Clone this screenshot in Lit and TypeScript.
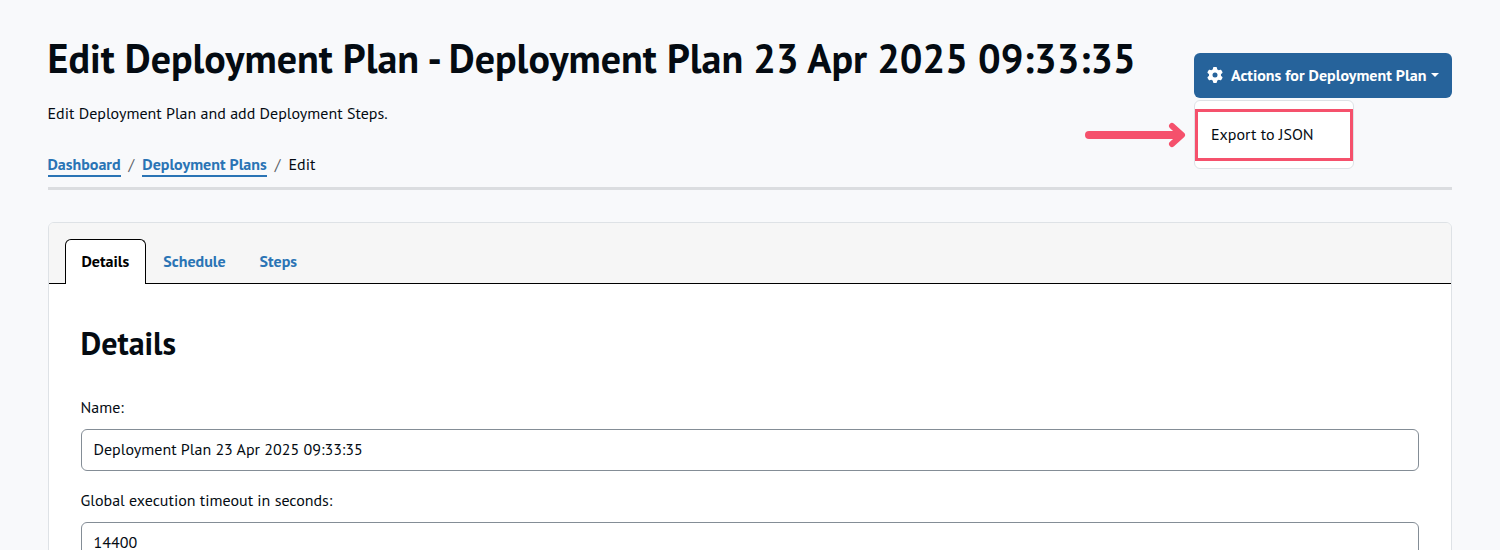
import { LitElement, html, css, svg } from "lit";
import { customElement, property, state } from "lit/decorators.js";

const gear = svg`<path fill="currentColor" d="M495.900 166.600c3.200 8.700.5 18.400-6.400 24.600l-43.300 39.400c1.100 8.300 1.700 16.800 1.700 25.400s-.6 17.100-1.700 25.400l43.300 39.400c6.900 6.200 9.600 15.900 6.400 24.600-4.400 11.900-9.700 23.300-15.800 34.300l-4.700 8.100c-6.600 11-14 21.400-22.100 31.200-5.900 7.200-15.700 9.600-24.500 6.800l-55.700-17.700c-13.400 10.300-28.200 18.900-44 25.400l-12.500 57.100c-2 9.100-9 16.300-18.200 17.800-13.800 2.300-28 3.500-42.500 3.500s-28.700-1.200-42.500-3.500c-9.200-1.500-16.200-8.700-18.200-17.800l-12.500-57.100c-15.800-6.500-30.600-15.100-44-25.400l-55.600 17.800c-8.800 2.800-18.600.3-24.500-6.800-8.100-9.800-15.500-20.200-22.100-31.200l-4.700-8.100c-6.100-11-11.400-22.400-15.800-34.300-3.200-8.700-.5-18.400 6.400-24.600l43.300-39.400C64.600 273.100 64 264.600 64 256s.6-17.100 1.700-25.400L22.400 191.200c-6.900-6.200-9.600-15.900-6.400-24.600 4.400-11.900 9.700-23.300 15.800-34.300l4.700-8.100c6.600-11 14-21.400 22.100-31.200 5.900-7.200 15.700-9.600 24.500-6.800l55.700 17.700c13.400-10.300 28.200-18.900 44-25.400l12.500-57.100c2-9.100 9-16.300 18.200-17.800C227.300 1.200 241.500 0 256 0s28.700 1.200 42.500 3.500c9.200 1.500 16.200 8.700 18.200 17.800l12.500 57.100c15.800 6.500 30.600 15.100 44 25.400l55.700-17.700c8.800-2.800 18.600-.3 24.500 6.800 8.100 9.800 15.500 20.200 22.100 31.200l4.700 8.100c6.100 11 11.400 22.400 15.800 34.300zM256 336a80 80 0 1 0 0-160 80 80 0 1 0 0 160z"/>`;

@customElement("action-menu")
class ActionMenu extends LitElement {
  @property({ type: Boolean }) open = false;

  static styles = css`
    :host { display: block; position: relative; }
    .button {
      display: flex; align-items: center; box-sizing: border-box;
      width: 258px; height: 45px; padding: 0 13px 1px; border: 0; border-radius: 6px;
      background: #26639b; color: #fff; font: inherit; font-weight: 700; white-space: nowrap;
    }
    .gear { flex: none; width: 16px; height: 16px; margin-right: 8px; }
    .caret {
      margin-left: 5px; border: 4px solid transparent;
      border-top-color: #fff; border-bottom: 0;
    }
    .menu {
      position: absolute; top: 47px; left: 0; box-sizing: border-box;
      width: 160px; height: 69px; padding: 8px 0;
      background: #fff; border: 1px solid #dee2e6; border-radius: 6px;
    }
    .item {
      box-sizing: border-box; display: flex; align-items: center;
      height: 52px; border: 3px solid #f5516c; padding: 0 13px 2px;
    }
    .arrow { position: absolute; left: -110px; top: 69px; width: 102px; height: 26px; }
  `;

  render() {
    return html`
      <button class="button" @click=${() => (this.open = !this.open)}>
        <svg class="gear" viewBox="0 0 512 512">${gear}</svg>
        <span>Actions for Deployment Plan</span>
        <span class="caret"></span>
      </button>
      ${this.open ? html`
        <div class="menu"><div class="item">Export to JSON</div></div>
        <svg class="arrow" viewBox="0 0 102 26" fill="none" stroke="#f5516c" stroke-linecap="round">
          <path stroke-width="8" d="M5 13H93"/>
          <path stroke-width="6" stroke-linejoin="round" d="M88 4L98 13L88 22"/>
        </svg>` : ""}
    `;
  }
}

@customElement("app-root")
class AppRoot extends LitElement {
  @state() private active = "Details";

  private fields = [
    { label: "Name:", value: "Deployment Plan 23 Apr 2025 09:33:35" },
    { label: "Global execution timeout in seconds:", value: "14400" },
  ];

  static styles = css`
    :host {
      display: block; box-sizing: border-box; height: 550px; overflow: hidden;
      padding: 35px 48.5px 0 47.5px; background: #f8f9fb; color: #040b12;
      font: 16px/24px "PT Sans", "Noto Sans", sans-serif;
    }
    .header { display: flex; justify-content: space-between; height: 152px; border-bottom: 3px solid #dbdde0; }
    h1 { margin: -1px 0 0; font-size: 40px; line-height: 48px; white-space: nowrap; }
    .lead { margin: 19px 0 0; }
    .crumbs { display: flex; margin-top: 27px; }
    .link { height: 23px; color: #2a74b5; font-weight: 700; border-bottom: 2px solid #2a74b5; }
    .slash { margin: 0 8px; color: #5b6167; }
    .actions { margin: 18px -0.5px 0 0; }
    .card {
      margin-top: 32px; height: 400px; background: #fff;
      border: 1px solid #dee2e6; border-radius: 6px; overflow: hidden;
    }
    .tabs { display: flex; padding: 16px 16px 0; background: #f6f6f6; border-bottom: 1px solid #000; }
    .tab {
      height: 43px; line-height: 43px; padding: 0 16px; margin-bottom: -1px;
      border: 1px solid transparent; border-bottom: 0; border-radius: 6px 6px 0 0;
      color: #2a74b5; font-weight: 700;
    }
    .tab.on { height: 44px; background: #fff; color: #000; border-color: #000; }
    .body { padding: 39px 32px; }
    h2 { margin: 0 0 32px; font-size: 32px; line-height: 40px; }
    .field { display: block; margin-bottom: 17px; }
    .input {
      box-sizing: border-box; display: block; width: 100%; height: 42px; margin-top: 10px;
      padding: 0 12px 2px; border: 1px solid #848d96; border-radius: 6px;
      background: #fff; color: inherit; font: inherit;
    }
  `;

  render() {
    return html`
      <header class="header">
        <div>
          <h1>Edit Deployment Plan - Deployment Plan 23 Apr 2025 09:33:35</h1>
          <p class="lead">Edit Deployment Plan and add Deployment Steps.</p>
          <nav class="crumbs">
            <a class="link">Dashboard</a><span class="slash">/</span>
            <a class="link">Deployment Plans</a><span class="slash">/</span>
            <span>Edit</span>
          </nav>
        </div>
        <action-menu class="actions" open></action-menu>
      </header>
      <section class="card">
        <div class="tabs">
          ${["Details", "Schedule", "Steps"].map(t => html`
            <a class="tab ${t === this.active ? "on" : ""}" @click=${() => (this.active = t)}>${t}</a>`)}
        </div>
        <div class="body">
          <h2>${this.active}</h2>
          ${this.fields.map(f => html`
            <label class="field">${f.label}<input class="input" .value=${f.value}></label>`)}
        </div>
      </section>
    `;
  }
}
